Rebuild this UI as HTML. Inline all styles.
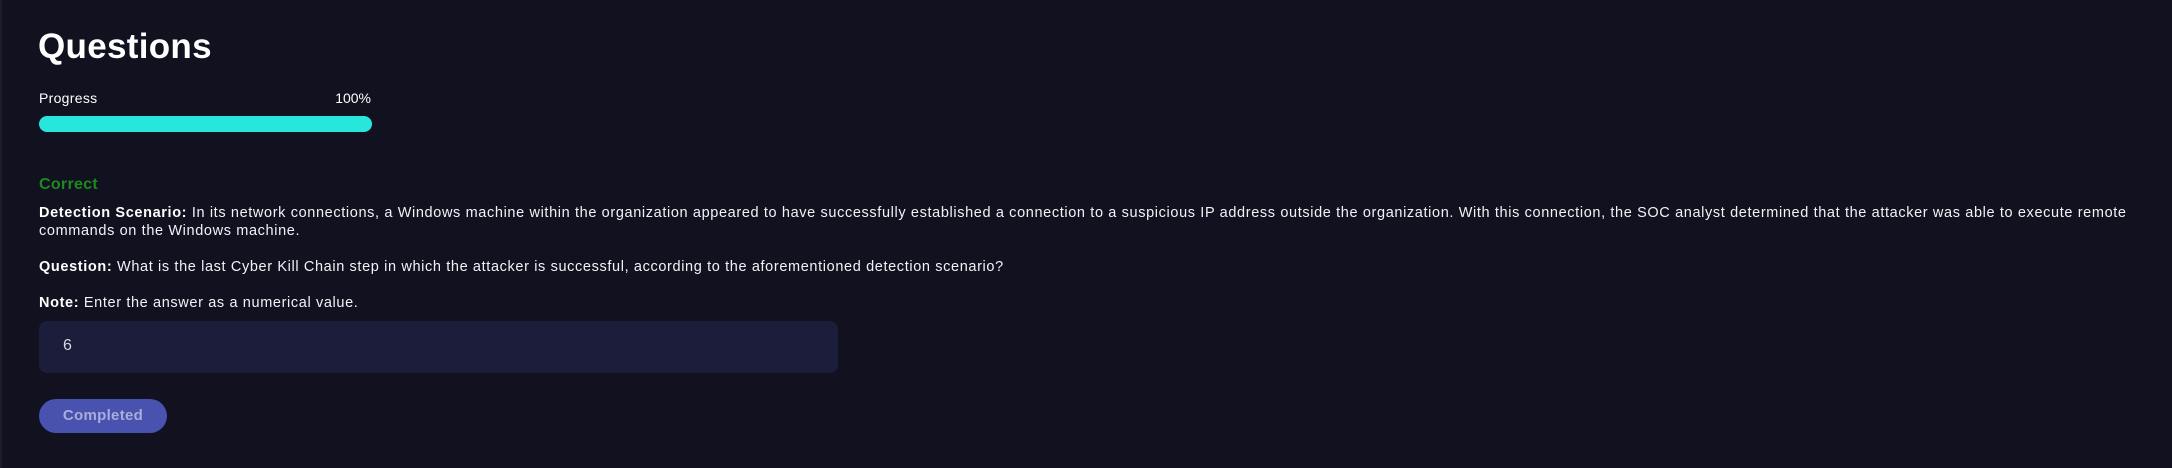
<!DOCTYPE html>
<html><head><meta charset="utf-8">
<style>
html,body{margin:0;padding:0;}
body{width:2172px;height:468px;background:#11111f;position:relative;overflow:hidden;font-family:"Liberation Sans",sans-serif;color:#fff;border-left:2px solid #1c1c2c;box-sizing:border-box;}
.t{position:absolute;left:36px;top:27px;font-size:35px;font-weight:bold;letter-spacing:0.3px;}
.pl{position:absolute;left:37px;top:90px;font-size:14px;letter-spacing:0.3px;}
.pr{position:absolute;left:333px;top:90px;font-size:14px;width:36px;text-align:right;}
.bar{position:absolute;left:37px;top:116px;width:333px;height:16px;border-radius:8px;background:#27e6dc;}
.c{position:absolute;left:37px;top:176px;font-size:16px;font-weight:bold;color:#1b8a1f;letter-spacing:0.3px;}
.p{position:absolute;left:37px;width:2130px;white-space:nowrap;font-size:14.5px;line-height:18px;letter-spacing:0.63px;color:#f2f2f6;}
.p b{color:#fff;}
.in{position:absolute;left:37px;top:321px;width:799px;height:52px;border-radius:8px;background:#1b1d3b;}
.in span{position:absolute;left:24px;top:16px;font-size:16px;color:#d6d7e4;}
.btn{position:absolute;left:37px;top:399px;width:128px;height:34px;border-radius:17px;background:#4a52b0;color:#a9add9;font-weight:bold;font-size:15px;line-height:34px;text-align:center;letter-spacing:0.3px;}
</style></head><body>
<div class="t">Questions</div>
<div class="pl">Progress</div>
<div class="pr">100%</div>
<div class="bar"></div>
<div class="c">Correct</div>
<div class="p" style="top:204px"><b>Detection Scenario:</b> In its network connections, a Windows machine within the organization appeared to have successfully established a connection to a suspicious IP address outside the organization. With this connection, the SOC analyst determined that the attacker was able to execute remote<br>commands on the Windows machine.</div>
<div class="p" style="top:258px"><b>Question:</b> What is the last Cyber Kill Chain step in which the attacker is successful, according to the aforementioned detection scenario?</div>
<div class="p" style="top:294px"><b>Note:</b> Enter the answer as a numerical value.</div>
<div class="in"><span>6</span></div>
<div class="btn">Completed</div>
</body></html>
